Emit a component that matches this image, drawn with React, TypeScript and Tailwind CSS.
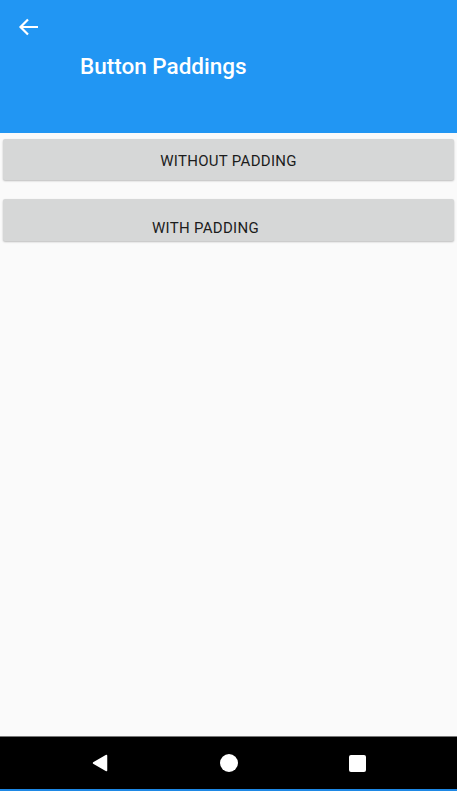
export default function App() {
  return (
    <div
      className="flex h-[791px] w-[457px] flex-col bg-[#fafafa]"
      style={{ fontFamily: "Roboto, 'Liberation Sans', sans-serif" }}
    >
      <header className="h-[133px] shrink-0 bg-[#2196f3] px-[16px] pt-[15px] text-white">
        <svg width="24" height="24" viewBox="0 0 24 24" fill="none">
          <path d="M22 12H5M12 4.5L4.5 12l7.5 7.5" stroke="white" strokeWidth="2.2" />
        </svg>
        <h1 className="ml-[64px] mt-[13px] text-[22.5px] font-medium leading-[28px]">Button Paddings</h1>
      </header>

      <main className="flex flex-1 flex-col gap-[19px] px-[3px] pt-[6px]">
        <button className="h-[41px] rounded-[2px] bg-[#d6d7d7] pt-[3px] text-[15px] font-normal tracking-[0.3px] text-[#1c1c1c] shadow-[0_1px_2px_rgba(0,0,0,0.25)]">
          WITHOUT PADDING
        </button>
        <button className="h-[42px] rounded-[2px] bg-[#d6d7d7] pb-0 pl-0 pr-[46px] pt-[17px] text-[15px] font-normal tracking-[0.3px] text-[#1c1c1c] shadow-[0_1px_2px_rgba(0,0,0,0.25)]">
          WITH PADDING
        </button>
      </main>

      <nav className="flex h-[55px] shrink-0 items-center justify-center gap-[111px] border-t border-[#777] border-b-[2px] border-b-[#1e88e5] bg-black">
        <div className="flex w-[18px] justify-center">
          <svg width="16" height="18" viewBox="0 0 16 18">
            <path d="M14.5 1.5V16.5L1.5 9Z" fill="white" stroke="white" strokeLinejoin="round" strokeWidth="1.5" />
          </svg>
        </div>
        <div className="h-[18px] w-[18px] rounded-full bg-white" />
        <div className="flex w-[18px] justify-center">
          <div className="h-[17px] w-[17px] rounded-[2px] bg-white" />
        </div>
      </nav>
    </div>
  );
}
